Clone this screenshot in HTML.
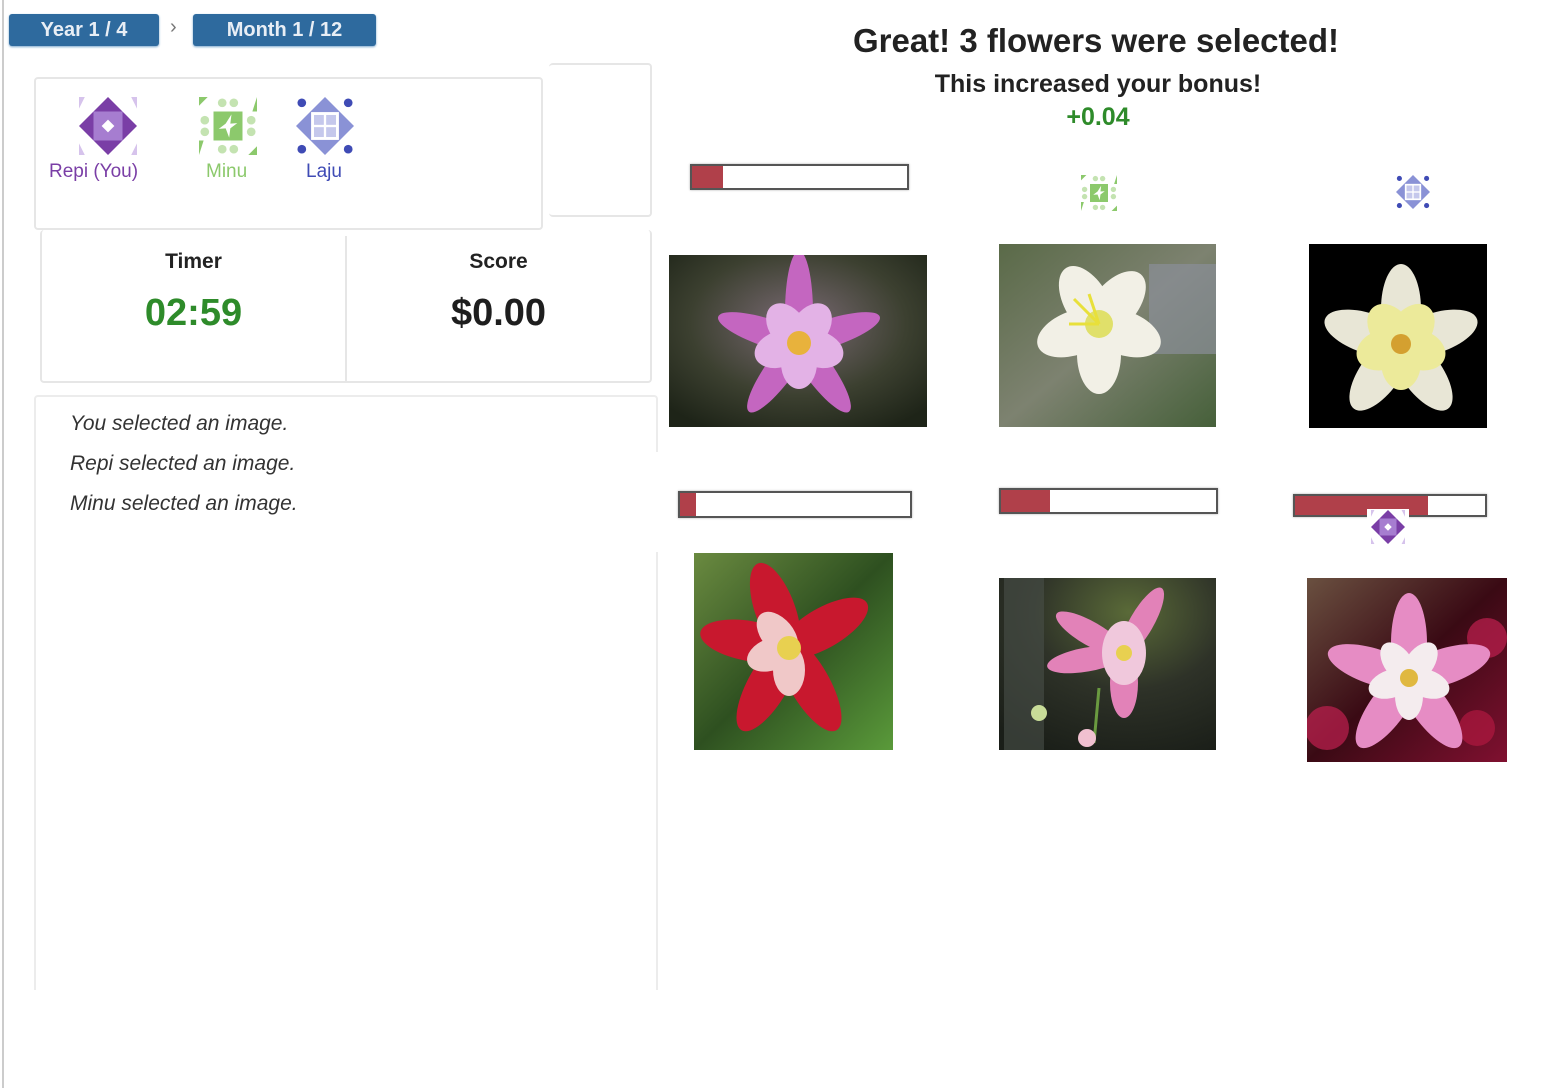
<!DOCTYPE html>
<html><head><meta charset="utf-8"><style>
*{margin:0;padding:0;box-sizing:border-box}
body{width:1560px;height:1088px;background:#fff;position:relative;overflow:hidden;font-family:"Liberation Sans",sans-serif}
.a{position:absolute}
.btn{background:#2e6a9e;color:#e8eef5;font-weight:bold;font-size:20px;text-align:center;line-height:32px;border-radius:3px;box-shadow:0 1px 2px #7aa6cc}
.panel{border:2px solid #e6e6e6;border-radius:4px;background:#fff}
.bar{border:2px solid #555;background:#fff;box-shadow:0 0 2px #aaa}
.bar i{display:block;height:100%;background:#b0404a}
.log{font-style:italic;font-size:21px;color:#333}
.img{overflow:hidden}
</style></head><body>
<svg width="0" height="0" style="position:absolute">
<defs>
<symbol id="repi" viewBox="0 0 10 10">
<polygon points="0,0 1,0 0,2" fill="#d6c3ec"/><polygon points="10,0 9,0 10,2" fill="#d6c3ec"/>
<polygon points="0,10 1,10 0,8" fill="#d6c3ec"/><polygon points="10,10 9,10 10,8" fill="#d6c3ec"/>
<polygon points="5,0 10,5 5,10 0,5" fill="#7a3ea6"/>
<rect x="2.5" y="2.5" width="5" height="5" fill="#a67dd0"/>
<polygon points="5,3.9 6.1,5 5,6.1 3.9,5" fill="#fff"/>
</symbol>
<symbol id="minu" viewBox="0 0 10 10">
<polygon points="0,0 1.5,0 0,1.5" fill="#8cc96c"/><polygon points="10,0 10,2.5 9.2,2.5" fill="#8cc96c"/>
<polygon points="0,10 0,7.5 0.8,7.5" fill="#8cc96c"/><polygon points="10,10 8.5,10 10,8.5" fill="#8cc96c"/>
<g fill="#c4e3b1"><circle cx="4" cy="1" r=".75"/><circle cx="6" cy="1" r=".75"/><circle cx="4" cy="9" r=".75"/><circle cx="6" cy="9" r=".75"/><circle cx="1" cy="4" r=".75"/><circle cx="1" cy="6" r=".75"/><circle cx="9" cy="4" r=".75"/><circle cx="9" cy="6" r=".75"/></g>
<rect x="2.5" y="2.5" width="5" height="5" fill="#8cc96c"/>
<polygon points="5.6,3 5.4,4.6 6.6,4.5 5.4,5.4 5.2,7 4.6,5.4 3.4,5.5 4.6,4.6" fill="#fff"/>
</symbol>
<symbol id="laju" viewBox="0 0 10 10">
<polygon points="5,0 10,5 5,10 0,5" fill="#8a92d6"/>
<g fill="#3f4bb5"><circle cx="1" cy="1" r=".75"/><circle cx="9" cy="1" r=".75"/><circle cx="1" cy="9" r=".75"/><circle cx="9" cy="9" r=".75"/></g>
<rect x="2.6" y="2.6" width="4.8" height="4.8" fill="#fff"/>
<g fill="#c5c8ec"><rect x="3.1" y="3.1" width="1.7" height="1.7"/><rect x="5.2" y="3.1" width="1.7" height="1.7"/><rect x="3.1" y="5.2" width="1.7" height="1.7"/><rect x="5.2" y="5.2" width="1.7" height="1.7"/></g>
</symbol>
</defs></svg>

<div class="a" style="left:2px;top:0;width:2px;height:1088px;background:#ccc"></div>
<div class="a btn" style="left:9px;top:14px;width:150px;height:32px">Year 1 / 4</div>
<div class="a" style="left:170px;top:16px;color:#777;font-size:20px">›</div>
<div class="a btn" style="left:193px;top:14px;width:183px;height:32px">Month 1 / 12</div>

<div class="a panel" style="left:549px;top:63px;width:103px;height:154px;border-left:none"></div>
<div class="a panel" style="left:34px;top:77px;width:509px;height:153px"></div>
<svg class="a" style="left:79px;top:97px" width="58" height="58"><use href="#repi"/></svg>
<svg class="a" style="left:199px;top:97px" width="58" height="58"><use href="#minu"/></svg>
<svg class="a" style="left:296px;top:97px" width="58" height="58"><use href="#laju"/></svg>
<div class="a" style="left:49px;top:161px;font-size:19px;color:#7a3ea6">Repi (You)</div>
<div class="a" style="left:206px;top:161px;font-size:19px;color:#8cc96c">Minu</div>
<div class="a" style="left:306px;top:161px;font-size:19px;color:#3f4bb5">Laju</div>

<div class="a panel" style="left:40px;top:230px;width:612px;height:153px;border-top:none"></div>
<div class="a" style="left:345px;top:236px;width:2px;height:147px;background:#e6e6e6"></div>
<div class="a" style="left:42px;top:250px;width:303px;text-align:center;font-weight:bold;font-size:21px;color:#222">Timer</div>
<div class="a" style="left:42px;top:292px;width:303px;text-align:center;font-weight:bold;font-size:38px;color:#2e8b2a">02:59</div>
<div class="a" style="left:347px;top:250px;width:303px;text-align:center;font-weight:bold;font-size:21px;color:#222">Score</div>
<div class="a" style="left:347px;top:292px;width:303px;text-align:center;font-weight:bold;font-size:38px;color:#1e1e1e">$0.00</div>

<div class="a" style="left:34px;top:395px;width:624px;height:595px;border:2px solid #ececec;border-bottom:none;border-radius:4px 4px 0 0"></div>
<div class="a" style="left:656px;top:452px;width:4px;height:100px;background:#fff"></div>
<div class="a log" style="left:70px;top:412px">You selected an image.</div>
<div class="a log" style="left:70px;top:452px">Repi selected an image.</div>
<div class="a log" style="left:70px;top:492px">Minu selected an image.</div>

<div class="a" style="left:660px;top:22px;width:872px;text-align:center;font-weight:bold;font-size:33px;color:#222">Great! 3 flowers were selected!</div>
<div class="a" style="left:660px;top:70px;width:876px;text-align:center;font-weight:bold;font-size:25px;color:#222">This increased your bonus!</div>
<div class="a" style="left:660px;top:103px;width:876px;text-align:center;font-weight:bold;font-size:25px;color:#2e8b2a">+0.04</div>

<div class="a bar" style="left:690px;top:164px;width:219px;height:26px"><i style="width:31px"></i></div>
<svg class="a" style="left:1081px;top:175px" width="36" height="36"><use href="#minu"/></svg>
<svg class="a" style="left:1396px;top:175px" width="34" height="34"><use href="#laju"/></svg>
<div class="a bar" style="left:678px;top:491px;width:234px;height:27px"><i style="width:16px"></i></div>
<div class="a bar" style="left:999px;top:488px;width:219px;height:26px"><i style="width:49px"></i></div>
<div class="a bar" style="left:1293px;top:494px;width:194px;height:23px"><i style="width:133px"></i></div>
<div class="a" style="left:1367px;top:509px;width:42px;height:36px;background:#fff"></div>
<svg class="a" style="left:1371px;top:510px" width="34" height="34"><use href="#repi"/></svg>

<!-- flower images -->
<svg class="a img" style="left:669px;top:255px" width="258" height="172" viewBox="0 0 258 172">
<defs><radialGradient id="g1" cx=".5" cy=".4" r=".7"><stop offset="0" stop-color="#7a6a74"/><stop offset=".6" stop-color="#3c4030"/><stop offset="1" stop-color="#1e2418"/></radialGradient></defs>
<rect width="258" height="172" fill="url(#g1)"/>
<g transform="translate(130,88)"><g fill="#c466c0"><ellipse rx="14" ry="62" transform="rotate(0) translate(0,-30)"/><ellipse rx="14" ry="55" transform="rotate(72) translate(0,-30)"/><ellipse rx="14" ry="55" transform="rotate(144) translate(0,-30)"/><ellipse rx="14" ry="55" transform="rotate(216) translate(0,-30)"/><ellipse rx="14" ry="55" transform="rotate(288) translate(0,-30)"/></g>
<g fill="#e3b2e6"><ellipse rx="18" ry="26" transform="rotate(36) translate(0,-20)"/><ellipse rx="18" ry="26" transform="rotate(108) translate(0,-20)"/><ellipse rx="18" ry="26" transform="rotate(180) translate(0,-20)"/><ellipse rx="18" ry="26" transform="rotate(252) translate(0,-20)"/><ellipse rx="18" ry="26" transform="rotate(324) translate(0,-20)"/></g>
<circle r="12" fill="#e8b23c"/></g></svg>

<svg class="a img" style="left:999px;top:244px" width="217" height="183" viewBox="0 0 217 183">
<defs><linearGradient id="g2" x1="0" y1="0" x2="1" y2="1"><stop offset="0" stop-color="#5a6a48"/><stop offset=".5" stop-color="#7d8270"/><stop offset="1" stop-color="#46603a"/></linearGradient></defs>
<rect width="217" height="183" fill="url(#g2)"/><rect x="150" y="20" width="67" height="90" fill="#8a8e98" opacity=".7"/>
<g transform="translate(100,80)"><g fill="#f2f0e6"><ellipse rx="22" ry="40" transform="rotate(-30) translate(0,-25)"/><ellipse rx="22" ry="40" transform="rotate(40) translate(0,-25)"/><ellipse rx="22" ry="40" transform="rotate(110) translate(0,-25)"/><ellipse rx="22" ry="40" transform="rotate(180) translate(0,-30)"/><ellipse rx="22" ry="40" transform="rotate(250) translate(0,-25)"/></g>
<circle r="14" fill="#e0e06a"/><g stroke="#e8e03a" stroke-width="3"><line x1="0" y1="0" x2="-25" y2="-25"/><line x1="0" y1="0" x2="-30" y2="0"/><line x1="0" y1="0" x2="-10" y2="-30"/></g></g></svg>

<svg class="a img" style="left:1309px;top:244px" width="178" height="184" viewBox="0 0 178 184">
<rect width="178" height="184" fill="#000"/>
<g transform="translate(92,100)"><g fill="#e8e6d6"><ellipse rx="20" ry="45" transform="rotate(0) translate(0,-35)"/><ellipse rx="20" ry="45" transform="rotate(72) translate(0,-35)"/><ellipse rx="20" ry="45" transform="rotate(144) translate(0,-35)"/><ellipse rx="20" ry="45" transform="rotate(216) translate(0,-35)"/><ellipse rx="20" ry="45" transform="rotate(288) translate(0,-35)"/></g>
<g fill="#ecea9a"><ellipse rx="20" ry="28" transform="rotate(36) translate(0,-18)"/><ellipse rx="20" ry="28" transform="rotate(108) translate(0,-18)"/><ellipse rx="20" ry="28" transform="rotate(180) translate(0,-18)"/><ellipse rx="20" ry="28" transform="rotate(252) translate(0,-18)"/><ellipse rx="20" ry="28" transform="rotate(324) translate(0,-18)"/></g>
<circle r="10" fill="#d4a030"/></g></svg>

<svg class="a img" style="left:694px;top:553px" width="199" height="197" viewBox="0 0 199 197">
<defs><linearGradient id="g4" x1="0" y1="0" x2="1" y2="1"><stop offset="0" stop-color="#6a8a40"/><stop offset=".5" stop-color="#2e5020"/><stop offset="1" stop-color="#5a9a3a"/></linearGradient></defs>
<rect width="199" height="197" fill="url(#g4)"/>
<g transform="translate(95,95)"><g fill="#c8182e"><ellipse rx="20" ry="50" transform="rotate(-20) translate(0,-40)"/><ellipse rx="20" ry="50" transform="rotate(60) translate(0,-40)"/><ellipse rx="20" ry="55" transform="rotate(150) translate(0,-40)"/><ellipse rx="20" ry="55" transform="rotate(210) translate(0,-40)"/><ellipse rx="20" ry="50" transform="rotate(280) translate(0,-40)"/></g>
<g fill="#f0c8c8"><ellipse rx="16" ry="26" transform="rotate(-40) translate(0,-18)"/><ellipse rx="16" ry="26" transform="rotate(180) translate(0,-22)"/><ellipse rx="16" ry="26" transform="rotate(250) translate(0,-18)"/></g>
<circle r="12" fill="#e8d050"/></g></svg>

<svg class="a img" style="left:999px;top:578px" width="217" height="172" viewBox="0 0 217 172">
<defs><radialGradient id="g5" cx=".6" cy=".2" r=".9"><stop offset="0" stop-color="#5a6a38"/><stop offset=".5" stop-color="#2e3228"/><stop offset="1" stop-color="#1a1e18"/></radialGradient></defs>
<rect width="217" height="172" fill="url(#g5)"/><rect x="5" y="0" width="40" height="172" fill="#4a504a" opacity=".6"/>
<g transform="translate(125,75)"><g fill="#e282b8"><ellipse rx="12" ry="40" transform="rotate(-60) translate(0,-38)"/><ellipse rx="12" ry="40" transform="rotate(-100) translate(0,-38)"/><ellipse rx="12" ry="40" transform="rotate(30) translate(0,-35)"/><ellipse rx="14" ry="35" transform="rotate(180) translate(0,-30)"/></g>
<ellipse rx="22" ry="32" fill="#f0c8dc"/><circle r="8" fill="#e8d050"/></g>
<line x1="100" y1="110" x2="95" y2="165" stroke="#6a9a40" stroke-width="3"/><circle cx="40" cy="135" r="8" fill="#c8dc98"/><circle cx="88" cy="160" r="9" fill="#f0c0d0"/></svg>

<svg class="a img" style="left:1307px;top:578px" width="200" height="184" viewBox="0 0 200 184">
<defs><linearGradient id="g6" x1="0" y1="0" x2="1" y2="1"><stop offset="0" stop-color="#6a5040"/><stop offset=".5" stop-color="#3a0a14"/><stop offset="1" stop-color="#801030"/></linearGradient></defs>
<rect width="200" height="184" fill="url(#g6)"/><circle cx="180" cy="60" r="20" fill="#c02050" opacity=".7"/><circle cx="20" cy="150" r="22" fill="#c02050" opacity=".7"/><circle cx="170" cy="150" r="18" fill="#b01840" opacity=".7"/>
<g transform="translate(102,100)"><g fill="#e68cc4"><ellipse rx="18" ry="50" transform="rotate(0) translate(0,-35)"/><ellipse rx="18" ry="50" transform="rotate(72) translate(0,-35)"/><ellipse rx="18" ry="50" transform="rotate(144) translate(0,-35)"/><ellipse rx="18" ry="50" transform="rotate(216) translate(0,-35)"/><ellipse rx="18" ry="50" transform="rotate(288) translate(0,-35)"/></g>
<g fill="#f4ecee"><ellipse rx="14" ry="24" transform="rotate(36) translate(0,-18)"/><ellipse rx="14" ry="24" transform="rotate(108) translate(0,-18)"/><ellipse rx="14" ry="24" transform="rotate(180) translate(0,-18)"/><ellipse rx="14" ry="24" transform="rotate(252) translate(0,-18)"/><ellipse rx="14" ry="24" transform="rotate(324) translate(0,-18)"/></g>
<circle r="9" fill="#e0b840"/></g></svg>
</body></html>
